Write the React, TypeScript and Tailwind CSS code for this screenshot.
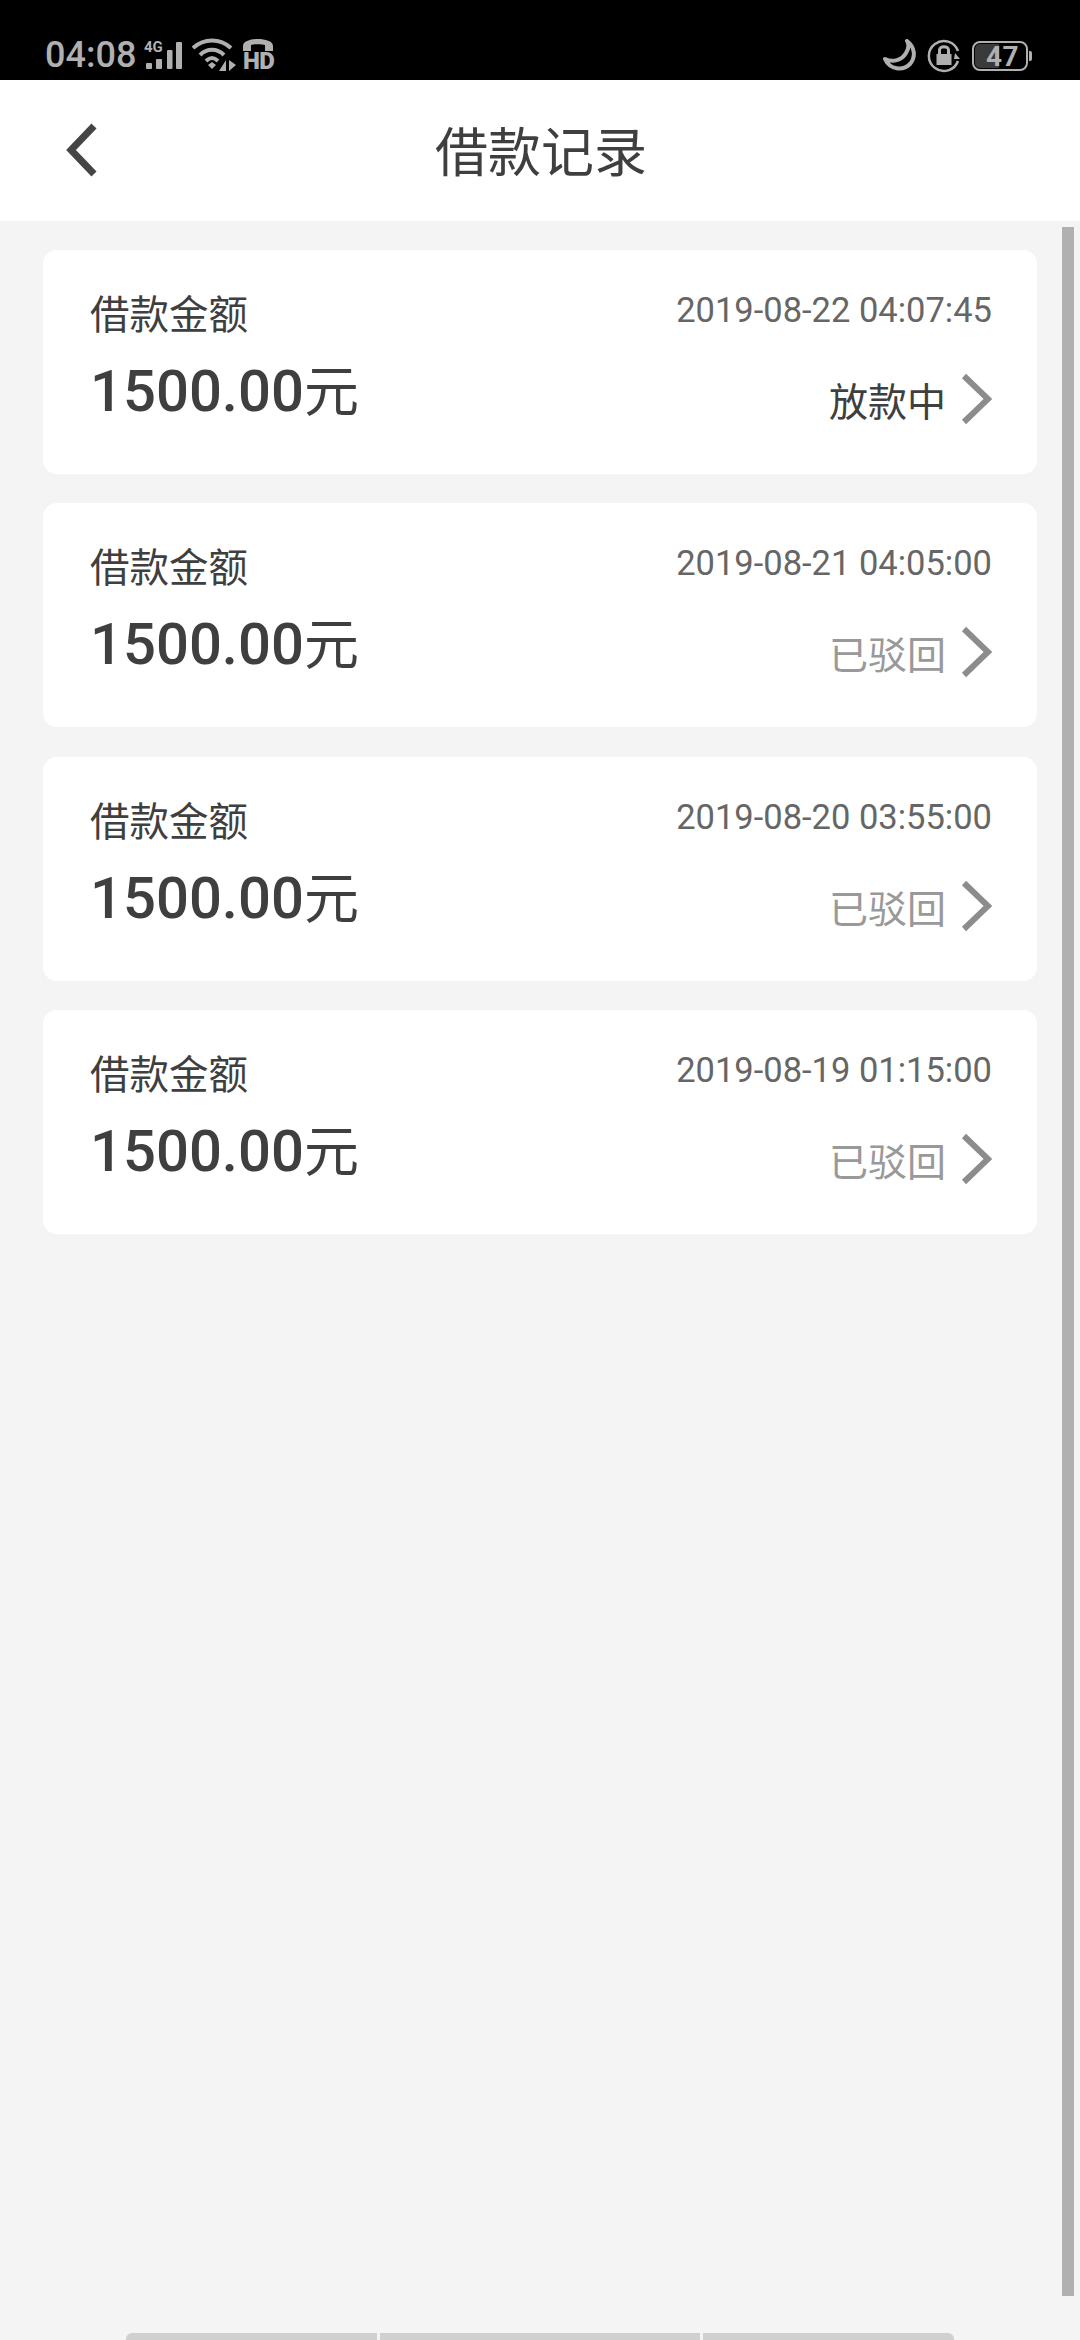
const CJK = "font-['Roboto','Noto_Sans_CJK_SC',sans-serif]";

const records = [
  { date: "2019-08-22 04:07:45", status: "放款中", active: true },
  { date: "2019-08-21 04:05:00", status: "已驳回", active: false },
  { date: "2019-08-20 03:55:00", status: "已驳回", active: false },
  { date: "2019-08-19 01:15:00", status: "已驳回", active: false },
];

function StatusLeft() {
  return (
    <div className="flex items-end">
      <span className="font-['Roboto',sans-serif] text-[36px] leading-[36px] font-medium text-[#b0b0b0] ml-[45px] mb-[7px] w-[97px]">04:08</span>
      <svg width="40" height="32" viewBox="0 0 40 32" className="mb-[10px]">
        <text x="2" y="14" fontFamily="Roboto, sans-serif" fontWeight="700" fontSize="15" fill="#b0b0b0">4G</text>
        <g fill="#b0b0b0">
          <rect x="4" y="25" width="6" height="6" rx="1" />
          <rect x="14" y="21" width="6" height="10" rx="1" />
          <rect x="25" y="12" width="5.500" height="19" rx="1" />
          <rect x="34" y="4" width="6" height="27" rx="1" />
        </g>
      </svg>
      <svg width="46" height="34" viewBox="0 0 46 34" className="ml-[10px] mb-[8px]">
        <g fill="none" stroke="#b0b0b0" strokeWidth="4">
          <path d="M1 10 C12 0 28 0 39 10" />
          <path d="M8 17 C15 10 25 10 32 17" />
          <path d="M14 23 C18 19 22 19 26 23" />
        </g>
        <path d="M16 27 L20 24 L24 27 L20 31 Z" fill="#b0b0b0" />
        <path d="M34 22 V33 H27 Z M37 22 V33 L44 27 Z" fill="#b0b0b0" />
      </svg>
      <div className="flex flex-col w-[32px] ml-[5px] mb-[10px]">
        <svg width="30" height="14" viewBox="0 0 30 14">
          <path d="M0 13 V8 C0 3 8 1 15 1 C22 1 30 3 30 8 V13 H22 V7 C19 6 11 6 8 7 V13 Z" fill="#b0b0b0" />
        </svg>
        <span className="font-['Roboto',sans-serif] mt-[1px] text-[24px] leading-[17px] font-black tracking-[-0.5px] text-[#b0b0b0]">HD</span>
      </div>
    </div>
  );
}

function StatusRight() {
  return (
    <div className="flex items-end mr-[48px] mb-[9px]">
      <svg width="34" height="32" viewBox="0 0 34 32">
        <path d="M24 2 C32 8 33 18 27 25 C20 32 7 31 2 20 C10 24 19 21 23 14 C26 9 26 5 24 2 Z" fill="none" stroke="#b0b0b0" strokeWidth="4" strokeLinejoin="round" />
      </svg>
      <svg width="34" height="34" viewBox="0 0 34 34" className="ml-[10px] mb-[-2px]">
        <path d="M31 12 A15 15 0 1 0 31 22" fill="none" stroke="#b0b0b0" strokeWidth="2.500" />
        <path d="M28 14 L33 20 L27 20 Z" fill="#b0b0b0" />
        <rect x="9.500" y="15" width="15" height="11" fill="#b0b0b0" />
        <path d="M12.500 15 V11 C12.500 6.500 21.500 6.500 21.500 11 V15" fill="none" stroke="#b0b0b0" strokeWidth="3" />
      </svg>
      <div className="relative ml-[11px] w-[60px] h-[30px]">
        <div className="absolute left-0 top-0 w-[56px] h-[30px] rounded-[8px] border-2 border-[#b0b0b0]" />
        <div className="absolute left-[3px] top-[3px] w-[24px] h-[24px] rounded-l-[5px] bg-[#3a3a3a]" />
        <div className="absolute right-0 top-[10px] w-[3px] h-[10px] rounded-r-[2px] bg-[#b0b0b0]" />
        <span className="absolute left-[14px] top-[3px] font-['Roboto',sans-serif] text-[28px] leading-[26px] font-bold tracking-[0.5px] text-[#b0b0b0]">47</span>
      </div>
    </div>
  );
}

function Card({ date, status, active }: { date: string; status: string; active: boolean }) {
  return (
    <div className="h-[224px] rounded-[14px] bg-white flex justify-between pl-[47px] pr-[45px]">
      <div className="flex flex-col">
        <div className={`${CJK} mt-[43px] h-[45px] text-[39.500px] leading-[45px] text-[#3f3f3f]`}>借款金额</div>
        <div className="mt-[18px] flex items-baseline h-[70px] leading-[70px]">
          <span className="font-['Roboto',sans-serif] text-[58px] font-medium text-[#3f3f3f]">1500.00</span>
          <span className={`${CJK} text-[55px] text-[#3f3f3f]`}>元</span>
        </div>
      </div>
      <div className="flex flex-col items-end">
        <div className="font-['Roboto',sans-serif] mt-[38px] h-[44px] text-[34.500px] leading-[44px] text-[#666666]">{date}</div>
        <div className="mt-[41px] flex items-center">
          <span className={`${CJK} relative top-[4px] text-[39px] leading-[50px] ${active ? "text-[#3f3f3f]" : "text-[#999999]"}`}>{status}</span>
          <svg width="32" height="52" viewBox="0 0 32 52" className="ml-[14px]">
            <path d="M4 3 L28 26 L4 49" fill="none" stroke="#8c8c8c" strokeWidth="6" />
          </svg>
        </div>
      </div>
    </div>
  );
}

export default function App() {
  return (
    <div className="relative w-[1080px] h-[2340px] overflow-hidden bg-[#f4f4f4]">
      <div className="h-[80px] bg-black flex items-end justify-between">
        <StatusLeft />
        <StatusRight />
      </div>
      <header className="relative h-[141px] bg-white flex items-center justify-center">
        <svg width="40" height="60" viewBox="0 0 40 60" className="absolute left-[62px] top-[40px]">
          <path d="M32 6 L9 30 L32 54" fill="none" stroke="#454545" strokeWidth="7" />
        </svg>
        <h1 className={`${CJK} relative top-[3px] left-[1px] text-[53px] leading-[70px] font-normal text-[#3f3f3f]`}>借款记录</h1>
      </header>
      <main className="flex flex-col gap-[29.3px] pl-[43px] pr-[43px] pt-[29px]">
        {records.map((r) => (
          <Card key={r.date} date={r.date} status={r.status} active={r.active} />
        ))}
      </main>
      <div className="absolute left-[1062px] top-[227px] w-[12px] h-[2069px] bg-[#b0b0b0]" />
      <div className="absolute bottom-0 left-[126px] flex gap-[3px] h-[7px]">
        <div className="w-[251px] bg-[#d0d0d0] rounded-tl-[6px]" />
        <div className="w-[320px] bg-[#d0d0d0]" />
        <div className="w-[251px] bg-[#d0d0d0] rounded-tr-[6px]" />
      </div>
    </div>
  );
}
